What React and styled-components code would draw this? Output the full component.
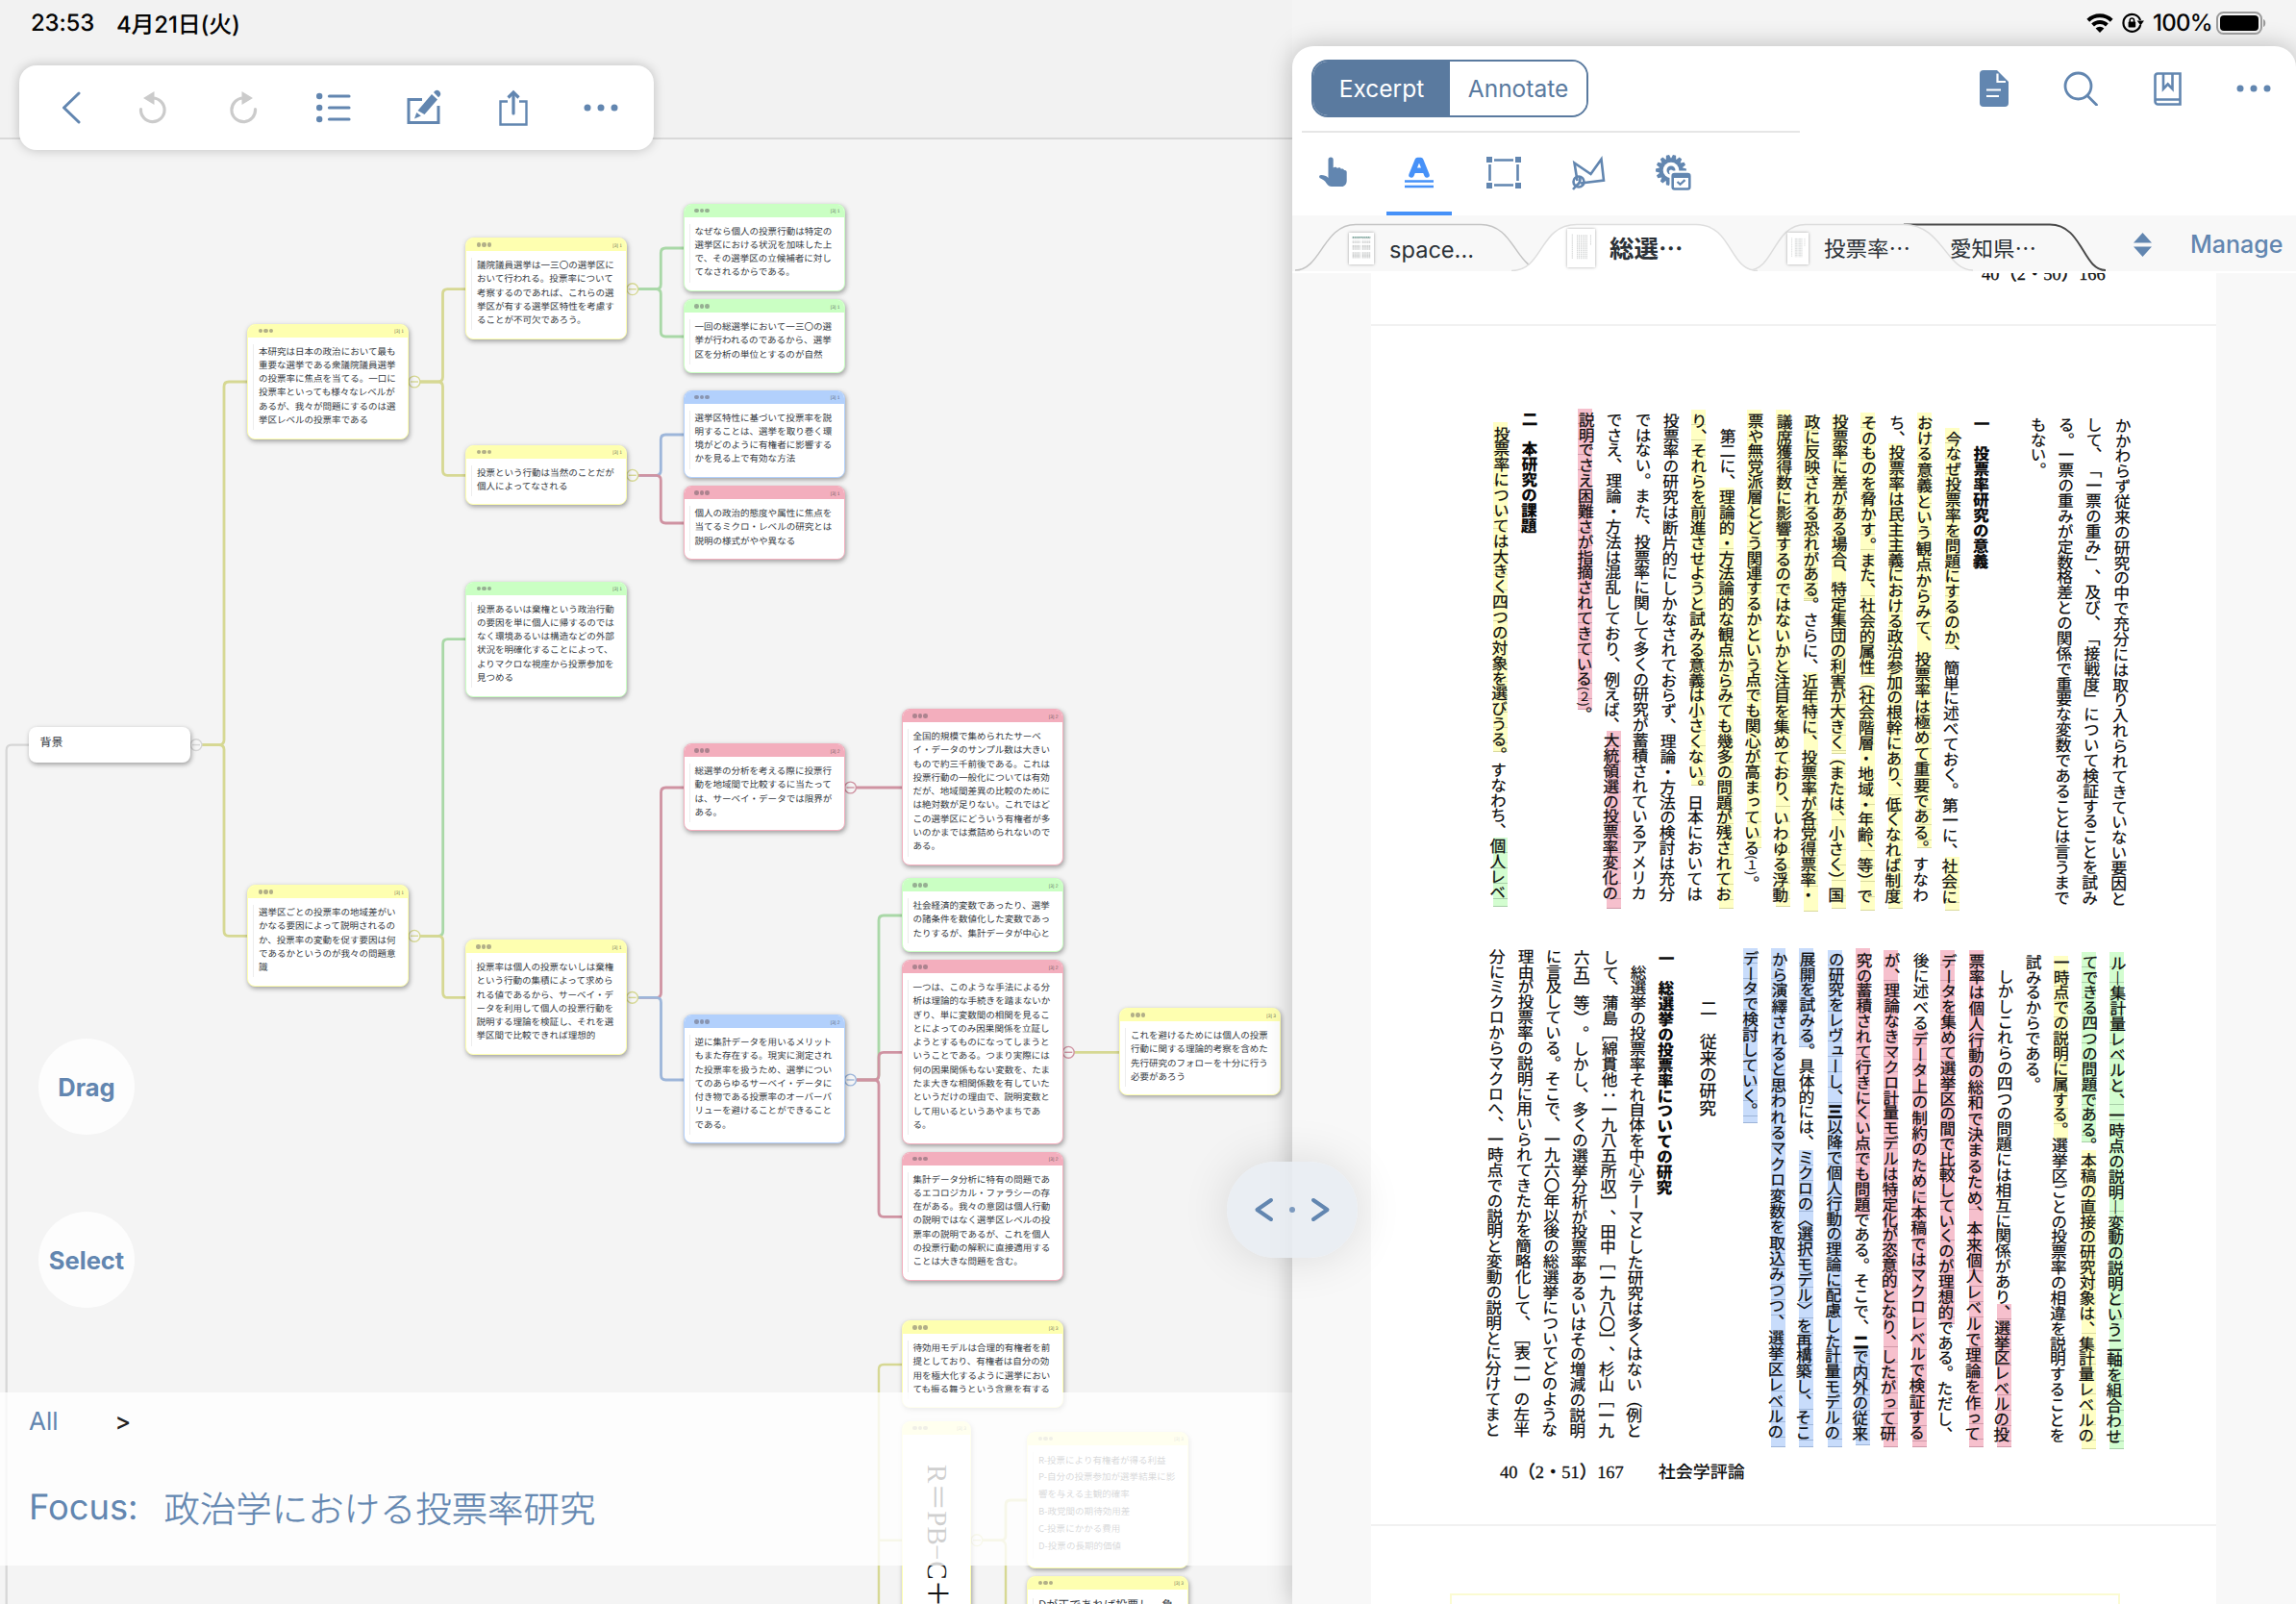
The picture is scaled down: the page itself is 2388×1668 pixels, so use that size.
import React from "react";
import styled, { createGlobalStyle, css } from "styled-components";

const Global = createGlobalStyle`
  * { box-sizing: border-box; }
  body { margin: 0; background: #f4f4f4; overflow: hidden; text-rendering: geometricPrecision; text-spacing-trim: space-all; }
  svg { display: block; flex: none; }
`;

const UI = `Inter, "Noto Sans CJK JP", sans-serif`;
const JP = `"Noto Sans CJK JP", sans-serif`;
const BLUE = "#6286b0";

const HEAD = { yellow: "#feffb0", green: "#caffc3", blue: "#b2d0fc", pink: "#f3aebd" };
const LINE = { yellow: "#d6d893", green: "#a9d8a7", blue: "#9db6da", pink: "#cf93a2", grey: "#d6d6d6" };
const MARK = { yellow: "#ffffc4", green: "#d3fdd0", blue: "#c8dcfb", pink: "#f6c0cd" };
const RULE = { yellow: "#d9d99e", green: "#a8cfa8", blue: "#9db4d8", pink: "#cf98a8" };

/* ---------- shell ---------- */

const Screen = styled.div`
  position: relative;
  width: 2388px;
  height: 1668px;
  overflow: hidden;
  display: grid;
  grid-template-columns: 1344px 1044px;
  background: #f4f4f4;
  font-family: ${UI};
`;

const StatusBar = styled.header`
  position: absolute;
  inset: 0 0 auto 0;
  height: 47px;
  padding: 0 31px 0 32px;
  display: flex;
  align-items: center;
  color: #050505;
  font-size: 24px;
  font-weight: 500;
  z-index: 5;
`;
const Clock = styled.span`
  width: 89px;
  letter-spacing: -0.2px;
`;
const DateText = styled.span`
  flex: 1;
  letter-spacing: -0.2px;
`;
const StatusIcons = styled.div`
  display: flex;
  align-items: center;
  gap: 9px;
`;
const Percent = styled.span`
  letter-spacing: -0.7px;
`;
const Battery = styled.svg`
  margin-left: -5px;
`;

/* ---------- mind map ---------- */

const Map = styled.section`
  position: relative;
  height: 1668px;
  overflow: hidden;
  background: #f4f4f4;
`;
const MapHeader = styled.div`
  height: 145px;
  background: #f2f2f2;
  border-bottom: 2px solid #d9d9d9;
`;
const Edges = styled.svg`
  position: absolute;
  inset: 0;
`;
const Toolbar = styled.nav`
  position: absolute;
  left: 20px;
  top: 68px;
  width: 660px;
  height: 88px;
  border-radius: 18px;
  background: #fff;
  box-shadow: 0 0 12px rgba(0, 0, 0, 0.22);
  padding-left: 7px;
  display: flex;
  align-items: center;
`;
const Tool = styled.button`
  flex: none;
  width: ${(p) => p.$w || 94}px;
  height: 88px;
  padding: 0;
  border: 0;
  background: none;
  display: flex;
  align-items: center;
  justify-content: center;
`;

const Node = styled.article`
  position: absolute;
  left: ${(p) => p.$x}px;
  top: ${(p) => p.$y}px;
  width: ${(p) => p.$w || 168}px;
  height: ${(p) => p.$h}px;
  border-radius: 8px;
  overflow: hidden;
  background: #fff;
  border: ${(p) => (p.$tone ? `1.5px solid ${HEAD[p.$tone]}` : "0")};
  box-shadow: 1px 2px 5px rgba(0, 0, 0, 0.36);
`;
const NodeHead = styled.div`
  height: 13px;
  padding: 0 4px 0 10.5px;
  display: flex;
  align-items: center;
  justify-content: space-between;
  background: ${(p) => HEAD[p.$tone]};
`;
const Dots = styled.span`
  display: flex;
  gap: 1.2px;
  i { width: 4.5px; height: 4.5px; border-radius: 50%; background: rgba(90, 80, 90, 0.46); }
`;
const PageRef = styled.span`
  font: 5px/6px "Liberation Sans", sans-serif;
  color: rgba(60, 60, 60, 0.75);
  padding-top: 2px;
`;
const NodeBody = styled.div`
  margin: ${(p) => p.$mt || 7}px 0 8px 5px;
  padding-left: 5px;
  border-left: 1px solid #ededed;
  font-family: ${JP};
  font-size: ${(p) => p.$fs || 9.53}px;
  line-height: ${(p) => p.$lh || 14.3}px;
  color: #363b43;
  padding-bottom: 4px;
`;
const Line = styled.div`
  white-space: nowrap;
`;
const RootLabel = styled.div`
  padding: 5.5px 12px;
  font-family: ${JP};
  font-size: 12px;
  line-height: 21px;
  color: #363b43;
`;
const Formula = styled.div`
  margin: 31px 0 0 3px;
  width: 64px;
  line-height: 64px;
  writing-mode: vertical-rl;
  text-orientation: sideways;
  white-space: nowrap;
  font-family: "Liberation Serif", "Noto Sans CJK JP", serif;
  font-size: 29px;
  color: #111;
`;
const Minus = styled.span`
  margin: 0 3px;
`;

const FloatButton = styled.button`
  position: absolute;
  left: 40px;
  top: ${(p) => p.$y}px;
  width: 100px;
  height: 100px;
  border: 0;
  border-radius: 50%;
  background: rgba(255, 255, 255, 0.8);
  color: ${BLUE};
  font: 700 25.5px ${UI};
  padding: 0;
`;
const FocusBar = styled.div`
  position: absolute;
  left: 0;
  right: 0;
  top: 1448px;
  height: 180px;
  padding: 0 30px;
  background: rgba(255, 255, 255, 0.8);
  color: ${BLUE};
`;
const Crumbs = styled.div`
  height: 61px;
  display: flex;
  align-items: center;
  gap: 59px;
  font-size: 26px;
  b { color: #222; font-weight: 500; font-size: 25px; }
`;
const FocusTitle = styled.h1`
  margin: 0;
  height: 115px;
  display: flex;
  align-items: center;
  gap: 27px;
  font-size: 36.3px;
  font-weight: 400;
  span:last-child { font-family: ${JP}; font-weight: 300; font-size: 37.4px; -webkit-text-stroke: 0.35px ${BLUE}; }
`;

/* ---------- document panel ---------- */

const Panel = styled.section`
  position: relative;
  margin-top: 48px;
  height: 1620px;
  border-radius: 22px 22px 0 0;
  background: #fff;
  box-shadow: 0 0 26px rgba(0, 0, 0, 0.24);
  display: flex;
  flex-direction: column;
`;
const TopRow = styled.div`
  height: 88px;
  padding: 0 0 0 20px;
  display: flex;
  align-items: center;
  justify-content: space-between;
`;
const Segmented = styled.div`
  display: flex;
  width: 288px;
  height: 60px;
  border: 2px solid #5a7a9f;
  border-radius: 17px;
  overflow: hidden;
`;
const Segment = styled.button`
  flex: 1;
  border: 0;
  padding: 0;
  background: ${(p) => (p.$on ? "#5a7a9f" : "#fff")};
  color: ${(p) => (p.$on ? "#fff" : "#5a7a9f")};
  font: 400 24.5px ${UI};
`;
const PanelActions = styled.div`
  display: flex;
`;
const Rule = styled.div`
  width: 518px;
  height: 2px;
  margin-left: 10px;
  background: #e6e6e6;
`;
const Tools = styled.div`
  height: 86px;
  padding-left: 9px;
  display: flex;
`;
const DocTool = styled.button`
  flex: none;
  width: 68px;
  margin: 0 ${(p) => p.$gap || 20}px 0 0;
  height: 86px;
  padding: 0;
  border: 0;
  border-bottom: 4px solid ${(p) => (p.$on ? "#4691f8" : "transparent")};
  background: none;
  display: flex;
  align-items: center;
  justify-content: center;
`;
const TabStrip = styled.div`
  position: relative;
  height: 58px;
  background: #f8f8f8;
  display: flex;
  align-items: center;
`;
const TabShapes = styled.svg`
  position: absolute;
  inset: 0;
`;
const Tab = styled.div`
  position: relative;
  width: ${(p) => p.$w}px;
  padding-left: ${(p) => p.$pad}px;
  height: 58px;
  display: flex;
  align-items: center;
  gap: ${(p) => p.$gap || 15}px;
  white-space: nowrap;
  color: #2b3137;
  font-size: ${(p) => p.$fs || 22.5}px;
  font-weight: ${(p) => (p.$on ? 700 : 400)};
  span { padding-top: 14px; line-height: 30px; }
`;
const Thumb = styled.div`
  width: ${(p) => p.$w}px;
  height: ${(p) => p.$h}px;
  margin-top: 10px;
  padding: 4px 3px;
  background: #fff;
  box-shadow: 0 0 3px rgba(0, 0, 0, 0.35);
  svg { width: 100%; height: 100%; }
`;
const Manage = styled.button`
  position: relative;
  border: 0;
  padding: 2px 0 0;
  background: none;
  color: ${BLUE};
  font: 500 25px ${UI};
  display: flex;
  align-items: center;
  gap: 40px;
`;
const Reader = styled.div`
  flex: 1;
  min-height: 0;
  margin-top: 2px;
  padding: 0 83px 0 82px;
  background: #f8f8f8;
  overflow: hidden;
`;
const Sheet = styled.div`
  height: ${(p) => p.$h}px;
  background: #fff;
  border-bottom: 2px solid #f1f1f1;
  overflow: hidden;
`;
const Folio = styled.div`
  font-family: "Liberation Serif", "Noto Sans CJK JP", serif;
  font-size: 18.4px;
  font-weight: 500;
  color: #111;
  white-space: nowrap;
  display: flex;
  -webkit-text-stroke: 0.3px #111;
  line-height: 20px;
  gap: ${(p) => p.$gap || 0}px;
  margin: ${(p) => p.$m};
  span + span { font-size: 18px; -webkit-text-stroke: 0; }
`;
const PrevFolio = styled(Folio)`
  margin: -9px 0 0 635px;
`;
const Block = styled.div`
  height: 508px;
  margin: ${(p) => p.$m};
  display: flex;
  flex-direction: row-reverse;
  align-items: flex-start;
`;
const Column = styled.div`
  position: relative;
  flex: none;
  width: ${(p) => p.$w}px;
  height: 508px;
  margin-top: ${(p) => p.$drop}px;
`;
const Glyphs = styled.div`
  position: relative;
  left: 0.8px;
  height: 508px;
  line-height: ${(p) => p.$w}px;
  writing-mode: vertical-rl;
  white-space: pre;
  transform: skewX(-0.55deg);
  transform-origin: 50% 0;
  font-family: ${JP};
  font-size: ${(p) => p.$fs}px;
  font-weight: ${(p) => (p.$bold ? 900 : 400)};
  -webkit-text-stroke: ${(p) => (p.$bold ? 0 : 0.22)}px #0c0c0c;
  letter-spacing: ${(p) => p.$ls}px;
  color: #0c0c0c;
`;
const NoteRef = styled.span`
  font-size: 12.5px;
  letter-spacing: 0;
`;
const Strong = styled.span`
  font-weight: 900;
`;
const Highlight = styled.div`
  position: absolute;
  left: 7px;
  width: 15px;
  top: ${(p) => p.$y}px;
  height: ${(p) => p.$h}px;
  border-bottom: 1px solid ${(p) => RULE[p.$c]};
  ${(p) => css`background: repeating-linear-gradient(${MARK[p.$c]} 0 15px, ${RULE[p.$c]} 15px 15.9px);`}
`;
const NextFrame = styled.div`
  margin: 70px 100px 0 82px;
  height: 60px;
  border: 2px solid #fbfbd2;
`;

const Handle = styled.div`
  position: absolute;
  left: 1276px;
  top: 1208px;
  width: 136px;
  height: 100px;
  border-radius: 50px;
  background: rgba(232, 236, 242, 0.86);
  box-shadow: 0 0 50px rgba(0, 0, 0, 0.12);
  display: flex;
  align-items: center;
  justify-content: center;
  z-index: 4;
`;

/* ---------- data ---------- */

const NODES = [
  { x: 257, y: 337, t: "yellow", r: "[3] 1", l: ["本研究は日本の政治において最も", "重要な選挙である衆議院議員選挙", "の投票率に焦点を当てる。一口に", "投票率といっても様々なレベルが", "あるが、我々が問題にするのは選", "挙区レベルの投票率である"] },
  { x: 484, y: 247.5, t: "yellow", r: "[3] 1", l: ["議院議員選挙は一三〇の選挙区に", "おいて行われる。投票率について", "考察するのであれば、これらの選", "挙区が有する選挙区特性を考慮す", "ることが不可欠であろう。"] },
  { x: 484, y: 463, t: "yellow", r: "[3] 1", l: ["投票という行動は当然のことだが", "個人によってなされる"] },
  { x: 710.5, y: 212, t: "green", r: "[3] 1", l: ["なぜなら個人の投票行動は特定の", "選挙区における状況を加味した上", "で、その選挙区の立候補者に対し", "てなされるからである。"] },
  { x: 710.5, y: 311.5, t: "green", r: "[3] 1", l: ["一回の総選挙において一三〇の選", "挙が行われるのであるから、選挙", "区を分析の単位とするのが自然"] },
  { x: 710.5, y: 406, t: "blue", r: "[3] 1", l: ["選挙区特性に基づいて投票率を説", "明することは、選挙を取り巻く環", "境がどのように有権者に影響する", "かを見る上で有効な方法"] },
  { x: 710.5, y: 505.5, t: "pink", r: "[3] 1", l: ["個人の政治的態度や属性に焦点を", "当てるミクロ・レベルの研究とは", "説明の様式がやや異なる"] },
  { x: 484, y: 605, t: "green", r: "[3] 1", l: ["投票あるいは棄権という政治行動", "の要因を単に個人に帰するのでは", "なく環境あるいは構造などの外部", "状況を明確化することによって、", "よりマクロな視座から投票参加を", "見つめる"] },
  { x: 257, y: 920.5, t: "yellow", r: "[3] 1", l: ["選挙区ごとの投票率の地域差がい", "かなる要因によって説明されるの", "か、投票率の変動を促す要因は何", "であるかというのが我々の問題意", "識"] },
  { x: 483.5, y: 977.5, t: "yellow", r: "[3] 1", l: ["投票率は個人の投票ないしは棄権", "という行動の集積によって求めら", "れる値であるから、サーベイ・デ", "ータを利用して個人の投票行動を", "説明する理論を検証し、それを選", "挙区間で比較できれば理想的"] },
  { x: 710.5, y: 773.5, t: "pink", r: "[3] 2", l: ["総選挙の分析を考える際に投票行", "動を地域間で比較するに当たって", "は、サーベイ・データでは限界が", "ある。"] },
  { x: 937.5, y: 737.5, t: "pink", r: "[3] 2", l: ["全国的規模で集められたサーベ", "イ・データのサンプル数は大きい", "もので約三千前後である。これは", "投票行動の一般化については有効", "だが、地域間差異の比較のために", "は絶対数が足りない。これではど", "この選挙区にどういう有権者が多", "いのかまでは煮詰められないので", "ある。"] },
  { x: 937.5, y: 913.5, t: "green", r: "[3] 2", l: ["社会経済的変数であったり、選挙", "の諸条件を数値化した変数であっ", "たりするが、集計データが中心と"] },
  { x: 937.5, y: 998.5, t: "pink", r: "[3] 2", l: ["一つは、このような手法による分", "析は理論的な手続きを踏まないか", "ぎり、単に変数間の相関を見るこ", "とによってのみ因果関係を立証し", "ようとするものになってしまうと", "いうことである。つまり実際には", "何の因果関係もない変数を、たま", "たま大きな相関係数を有していた", "というだけの理由で、説明変数と", "して用いるというあやまちであ", "る。"] },
  { x: 937.5, y: 1198, t: "pink", r: "[3] 2", l: ["集計データ分析に特有の問題であ", "るエコロジカル・ファラシーの存", "在がある。我々の意図は個人行動", "の説明ではなく選挙区レベルの投", "票率の説明であるが、これを個人", "の投票行動の解釈に直接適用する", "ことは大きな問題を含む。"] },
  { x: 710.5, y: 1055.5, t: "blue", r: "[3] 2", l: ["逆に集計データを用いるメリット", "もまた存在する。現実に測定され", "た投票率を扱うため、選挙につい", "てのあらゆるサーベイ・データに", "付き物である投票率のオーバーバ", "リューを避けることができること", "である。"] },
  { x: 1164, y: 1048.5, t: "yellow", r: "[3] 3", l: ["これを避けるためには個人の投票", "行動に関する理論的考察を含めた", "先行研究のフォローを十分に行う", "必要があろう"] },
  { x: 937.5, y: 1373.5, t: "yellow", r: "[3] 3", l: ["待効用モデルは合理的有権者を前", "提としており、有権者は自分の効", "用を極大化するように選挙におい", "ても振る舞うという含意を有する"] },
  { x: 1068, y: 1489, t: "yellow", r: "[3] 3", h: 142, lh: 17.9, l: ["R-投票により有権者が得る利益", "P-自分の投票参加が選挙結果に影", "響を与える主観的確率", "B-政党間の期待効用差", "C-投票にかかる費用", "D-投票の長期的価値"] },
  { x: 1068, y: 1639, t: "yellow", r: "[3] 3", h: 80, fs: 12, mt: 9.5, l: ["Dが正であれば投票し、負"] },
];

const EDGES = [
  ["yellow", 210, 774.6, 233, 397, 257],
  ["yellow", 210, 774.6, 233, 973.3, 257],
  ["yellow", 437, 397, 460.5, 300.7, 484],
  ["yellow", 437, 397, 460.5, 494.3, 484],
  ["green", 664, 300.7, 687.3, 258, 711],
  ["green", 664, 300.7, 687.3, 350, 711],
  ["blue", 664, 494.3, 687.3, 452, 711],
  ["pink", 664, 494.3, 687.3, 544, 711],
  ["green", 437, 973.3, 460.7, 664.6, 484],
  ["yellow", 437, 973.3, 460.7, 1037.4, 484],
  ["pink", 664, 1037.4, 687.5, 819, 711],
  ["blue", 664, 1037.4, 687.5, 1123, 711],
  ["green", 891, 1123, 914, 952, 938],
  ["pink", 891, 1123, 914, 1094.3, 938],
  ["pink", 891, 1123, 914, 1265.3, 938],
  ["yellow", 1022, 1601.7, 1046, 1560, 1068],
];

const TOGGLES = [
  ["grey", 204, 774.6], ["yellow", 431, 397], ["yellow", 657.8, 300.7], ["yellow", 657.8, 494.3],
  ["yellow", 431, 973.3], ["yellow", 657.6, 1037.4], ["pink", 884.5, 819], ["blue", 884.5, 1123],
  ["pink", 1111.3, 1094.3], ["yellow", 1016, 1601.7],
];

const bend = (x1, y1, xm, y2, x2) => {
  const d = y2 > y1 ? 5 : -5;
  return `M${x1} ${y1}H${xm - 5}Q${xm} ${y1} ${xm} ${y1 + d}V${y2 - d}Q${xm} ${y2} ${xm + 5} ${y2}H${x2}`;
};

const UPPER = [
  { t: "かかわらず従来の研究の中で充分には取り入れられてきていない要因と" },
  { t: "して、「一票の重み」、及び、「接戦度」について検証することを試み" },
  { t: "る。一票の重みが定数格差との関係で重要な変数であることは言うまで" },
  { t: "もない。" },
  { t: "" },
  { t: "一　投票率研究の意義", b: 1 },
  { t: "　今なぜ投票率を問題にするのか、簡単に述べておく。第一に、社会に", h: [["yellow", 445, 675], ["yellow", 891, 947]] },
  { t: "おける意義という観点からみて、投票率は極めて重要である。すなわ", h: [["yellow", 429, 882]] },
  { t: "ち、投票率は民主主義における政治参加の根幹にあり、低くなれば制度", h: [["yellow", 461, 945]] },
  { t: "そのものを脅かす。また、社会的属性（社会階層・地域・年齢、等）で", h: [["yellow", 429, 704], ["yellow", 710, 947]] },
  { t: "投票率に差がある場合、特定集団の利害が大きく（または、小さく）国", h: [["yellow", 431, 784], ["yellow", 789, 945]] },
  { t: "政に反映される恐れがある。さらに、近年特に、投票率が各党得票率・", h: [["yellow", 432, 625], ["yellow", 699, 948]] },
  { t: "議席獲得数に影響するのではないかと注目を集めており、いわゆる浮動", h: [["yellow", 426, 943]] },
  { t: "票や無党派層とどう関連するかという点でも関心が高まっている(１)。", h: [["yellow", 426, 882]] },
  { t: "　第二に、理論的・方法論的な観点からみても幾多の問題が残されてお", h: [["yellow", 507, 945]] },
  { t: "り、それらを前進させようと試みる意義は小さくない。日本においては", h: [["yellow", 426, 817]] },
  { t: "投票率の研究は断片的にしかなされておらず、理論・方法の検討は充分" },
  { t: "ではない。また、投票率に関して多くの研究が蓄積されているアメリカ" },
  { t: "でさえ、理論・方法は混乱しており、例えば、大統領選の投票率変化の", h: [["pink", 760, 945]] },
  { t: "説明でさえ困難さが指摘されてきている(２)。", h: [["pink", 425, 738]] },
  { t: "" },
  { t: "二　本研究の課題", b: 1 },
  { t: "　投票率については大きく四つの対象を選びうる。すなわち、個人レベ", h: [["yellow", 439, 782], ["green", 871, 943]] },
];

const LOWER = [
  { t: "ル―集計量レベルと、一時点の説明―変動の説明という二軸を組合わせ", h: [["green", 990, 1507]] },
  { t: "てできる四つの問題である。本稿の直接の研究対象は、集計量レベルの", h: [["green", 990, 1188], ["yellow", 1196, 1507]] },
  { t: "一時点での説明に属する。選挙区ごとの投票率の相違を説明することを", h: [["yellow", 994, 1185]] },
  { t: "試みるからである。" },
  { t: "　しかしこれらの四つの問題には相互に関係があり、選挙区レベルの投", h: [["pink", 1356, 1505]] },
  { t: "票率は個人行動の総和で決まるため、本来個人レベルで理論を作って", h: [["pink", 988, 1505]] },
  { t: "データを集めて選挙区の間で比較していくのが理想的である。ただし、", h: [["pink", 988, 1377]] },
  { t: "後に述べるデータ上の制約のために本稿ではマクロレベルで検証する", h: [["pink", 1070, 1505]] },
  { t: "が、理論なきマクロ計量モデルは特定化が恣意的となり、したがって研", h: [["pink", 988, 1505]] },
  { t: "究の蓄積されて行きにくい点でも問題である。そこで、*二*で内外の従来", h: [["pink", 986, 1264], ["blue", 1403, 1503]] },
  { t: "の研究をレヴューし、*三*以降で個人行動の理論に配慮した計量モデルの", h: [["blue", 988, 1505]] },
  { t: "展開を試みる。具体的には、ミクロの〈選択モデル〉を再構築し、そこ", h: [["blue", 986, 1089], ["blue", 1196, 1505]] },
  { t: "から演繹されると思われるマクロ変数を取込みつつ、選挙区レベルの", h: [["blue", 986, 1505]] },
  { t: "データで検討していく。", h: [["blue", 986, 1168]] },
  { t: "　　　二　従来の研究", w: 58.7, fs: 18, pitch: 17.2 },
  { t: "一　総選挙の投票率についての研究", b: 1 },
  { t: "　総選挙の投票率それ自体を中心テーマとした研究は多くはない（例と" },
  { t: "して、蒲島［綿貫他：一九八五所収］、田中［一九八〇］、杉山［一九" },
  { t: "六五］等）。しかし、多くの選挙分析が投票率あるいはその増減の説明" },
  { t: "に言及している。そこで、一九六〇年以後の総選挙についてどのような" },
  { t: "理由が投票率の説明に用いられてきたかを簡略化して、［表一］の左半" },
  { t: "分にミクロからマクロへ、一時点での説明と変動の説明とに分けてまと" },
];

/* ---------- parts ---------- */

function MapNode({ n }) {
  const h = n.h || 34.2 + n.l.length * 14.3;
  return (
    <Node $x={n.x} $y={n.y - 0.5} $h={h} $tone={n.t}>
      <NodeHead $tone={n.t}>
        <Dots><i /><i /><i /></Dots>
        <PageRef>{n.r}</PageRef>
      </NodeHead>
      <NodeBody $lh={n.lh} $fs={n.fs} $mt={n.mt}>
        {n.l.map((s) => <Line key={s}>{s}</Line>)}
      </NodeBody>
    </Node>
  );
}

function TextBlock({ cols, top, m }) {
  let slot = 0;
  return (
    <Block $m={m}>
      {cols.map((c, i) => {
        const drop = -0.31 * slot;
        const w = c.w || 29.36;
        slot += w / 29.36;
        const plain = c.t.replace(/\*/g, "");
        const n = plain.length;
        const noted = /\(/.test(plain);
        const fs = c.fs || 16.7;
        const pitch = c.pitch || (n >= 30 && !noted ? 508 / n : 15.87);
        return (
          <Column key={i} $w={w} $drop={drop}>
            {(c.h || []).map(([k, a, b]) => (
              <Highlight key={a} $c={k} $y={a - top - drop} $h={b - a} />
            ))}
            <Glyphs $w={w} $fs={fs} $bold={c.b} $ls={+(pitch - fs).toFixed(3)}>
              {c.t.split(/(\(.\)|\*.\*)/).map((s, j) =>
                s[0] === "(" ? <NoteRef key={j}>{s}</NoteRef>
                  : s[0] === "*" ? <Strong key={j}>{s[1]}</Strong> : s
              )}
            </Glyphs>
          </Column>
        );
      })}
    </Block>
  );
}

const Ellipsis = () => (
  <svg width="36" height="8" fill={BLUE}><circle cx="4" cy="4" r="3.5" /><circle cx="18" cy="4" r="3.5" /><circle cx="32" cy="4" r="3.5" /></svg>
);

const Undo = () => (
  <svg width="30" height="34" viewBox="0 0 30 34" fill="none">
    <path d="M2.5 18.5A12.3 12.3 0 1 0 15 7" stroke="#cbcbcb" strokeWidth="3.2" strokeLinecap="round" />
    <path d="M16.5 0v14L5 7z" fill="#cbcbcb" />
  </svg>
);
const Flip = styled.span`
  transform: scaleX(-1);
`;

function gearPath(cx, cy, r1, r2, n) {
  let d = "";
  for (let i = 0; i < n; i++) {
    const a = (i / n) * Math.PI * 2;
    const s = Math.PI / n;
    [[r1, -0.95], [r2, -0.45], [r2, 0.45], [r1, 0.95]].forEach(([r, k], j) => {
      d += `${i || j ? "L" : "M"}${(cx + r * Math.cos(a + s * k)).toFixed(2)} ${(cy + r * Math.sin(a + s * k)).toFixed(2)}`;
    });
  }
  return d + "Z";
}

const ThumbLines = ({ vertical }) => (
  <svg viewBox="0 0 30 40" preserveAspectRatio="none" stroke="#a9adad" strokeWidth="1" strokeDasharray="2 .7">
    {vertical
      ? [10, 12.5, 15, 17.5, 20, 22.5].map((x) => <path key={x} d={`M${x} 3V34`} opacity=".7" />).concat(<path key="s" d="M3 2V34M28 3V16" opacity=".6" />)
      : [3, 8, 10, 15, 17, 19, 21, 27, 29, 31, 33, 35].map((y) => <path key={y} d={`M1 ${y}H13M16 ${y}H29`} />).concat(<path key="s" d="M1 1H29" stroke="#6f9c92" strokeWidth="2.5" />)}
  </svg>
);

export default function App() {
  return (
    <Screen>
      <Global />
      <StatusBar>
        <Clock>23:53</Clock>
        <DateText>4月21日(火)</DateText>
        <StatusIcons>
          <svg width="28" height="21" viewBox="0 0 28 21" fill="none" stroke="#000" strokeWidth="4">
            <path d="M1.8 8.2a17.5 17.5 0 0 1 24.4 0" /><path d="M6.6 13a10.6 10.6 0 0 1 14.8 0" />
            <path d="M14 21l-4.4-4.6a6.4 6.4 0 0 1 8.8 0z" fill="#000" stroke="none" />
          </svg>
          <svg width="23" height="22" viewBox="0 0 23 22" fill="none" stroke="#000" strokeWidth="2.2">
            <path d="M19.2 13A9 9 0 1 1 19 8" /><path d="M15.6 8.5H23L19.4 13.6z" fill="#000" stroke="none" />
            <rect x="6.6" y="9.6" width="7.6" height="5.8" rx="1" fill="#000" stroke="none" />
            <path d="M8.2 10V8.2a2.2 2.2 0 0 1 4.4 0V10" strokeWidth="1.5" />
          </svg>
          <Percent>100%</Percent>
          <Battery width="52" height="24" viewBox="0 0 52 24">
            <rect x="1" y="1" width="46" height="22" rx="6.5" fill="none" stroke="#9a9a9a" strokeWidth="2" />
            <rect x="4" y="4" width="40" height="16" rx="4" fill="#000" />
            <path d="M49 8c3 1 3 7 0 8z" fill="#9a9a9a" />
          </Battery>
        </StatusIcons>
      </StatusBar>

      <Map>
        <MapHeader />
        <Edges width="1344" height="1668" fill="none" strokeWidth="2.8">
          <path d="M6.7 1668V780Q6.7 774.6 12 774.6H30" stroke={LINE.grey} strokeWidth="2.2" />
          {EDGES.map((e, i) => (
            <path key={i} d={bend(e[1], e[2], e[3], e[4], e[5])} stroke={LINE[e[0]]} />
          ))}
          <path d="M890 819H938" stroke={LINE.pink} />
          <path d="M1117 1094.3H1164" stroke={LINE.yellow} />
          <path d="M914 1668V1424Q914 1419 919 1419H938M914 1601.7H938" stroke={LINE.yellow} strokeWidth="2.4" />
          <path d="M1040 1601.7Q1046 1601.7 1046 1608V1668" stroke={LINE.yellow} strokeWidth="2.4" />
          {TOGGLES.map(([c, x, y]) => (
            <g key={`${x}${y}`} stroke={LINE[c]} strokeWidth="1.4">
              <circle cx={x} cy={y} r="5.9" fill="#f6f6f6" /><path d={`M${x - 4} ${y}h8`} />
            </g>
          ))}
        </Edges>

        <Node $x={29.5} $y={755.5} $h={37}><RootLabel>背景</RootLabel></Node>
        {NODES.map((n) => <MapNode key={n.l[0]} n={n} />)}
        <Node $x={937.5} $y={1477.5} $w={72.5} $h={240} $tone="yellow">
          <NodeHead $tone="yellow"><Dots><i /><i /><i /></Dots><PageRef>[3] 3</PageRef></NodeHead>
          <Formula>R＝PB<Minus>−</Minus>C＋</Formula>
        </Node>

        <FloatButton $y={1080}>Drag</FloatButton>
        <FloatButton $y={1260}>Select</FloatButton>

        <FocusBar>
          <Crumbs><span>All</span><b>&gt;</b></Crumbs>
          <FocusTitle><span>Focus:</span><span>政治学における投票率研究</span></FocusTitle>
        </FocusBar>

        <Toolbar>
          <Tool>
            <svg width="20" height="34" fill="none" stroke={BLUE} strokeWidth="3" strokeLinecap="round" strokeLinejoin="round"><path d="M18 2L2.5 17 18 32" /></svg>
          </Tool>
          <Tool $w={76}><Undo /></Tool>
          <Tool $w={112}><Flip><Undo /></Flip></Tool>
          <Tool $w={75}>
            <svg width="36" height="32" fill={BLUE} stroke={BLUE} strokeWidth="3.2" strokeLinecap="round">
              {[4, 16, 28].map((y) => <g key={y}><circle cx="3.2" cy={y} r="3.2" stroke="none" /><path d={`M13.5 ${y}H34`} /></g>)}
            </svg>
          </Tool>
          <Tool $w={114}>
            <svg width="37" height="38" viewBox="0 0 37 38" fill="none" stroke={BLUE}>
              <path d="M16 10.5H2V34.5H33V17" strokeWidth="3" />
              <path d="M26 5l6 5.5L18.5 26l-7-4z" fill={BLUE} stroke="none" />
              <path d="M10.3 24l4.6 3.6L8 30.5z" fill={BLUE} stroke="none" />
              <path d="M28 3l1.5-1.4c1.3-1.3 3.2-1 4.6.5s1.6 3.4.4 4.7L33 8.3z" fill={BLUE} stroke="none" />
            </svg>
          </Tool>
          <Tool $w={72}>
            <svg width="30" height="38" viewBox="0 0 30 38" fill="none" stroke={BLUE} strokeWidth="2.4">
              <path d="M9 12.5H1.5V36.5H28.5V12.5H21" /><path d="M15 25V4" strokeWidth="3.2" strokeLinecap="round" /><path d="M9.5 8.5L15 3l5.5 5.5" strokeWidth="3.2" />
            </svg>
          </Tool>
          <Tool $w={110}><Ellipsis /></Tool>
        </Toolbar>
      </Map>

      <Panel>
        <TopRow>
          <Segmented><Segment $on>Excerpt</Segment><Segment>Annotate</Segment></Segmented>
          <PanelActions>
            <Tool $w={90}>
              <svg width="30" height="38" viewBox="0 0 30 38">
                <path d="M4 0H18l12 12V34a4 4 0 0 1-4 4H4a4 4 0 0 1-4-4V4a4 4 0 0 1 4-4z" fill={BLUE} />
                <path d="M18.5 3.5V12H27M7 20.5H22M7 27H20" stroke="#fff" strokeWidth="2.2" fill="none" />
              </svg>
            </Tool>
            <Tool $w={90}>
              <svg width="36" height="36" fill="none" stroke={BLUE} strokeWidth="2.8"><circle cx="15.5" cy="15.5" r="13.5" /><path d="M25 25.5L34.5 35" strokeLinecap="round" /></svg>
            </Tool>
            <Tool $w={90}>
              <svg width="29" height="35" fill="none" stroke={BLUE} strokeWidth="2.6"><path d="M27.5 33.5H4.5a3 3 0 0 1-3-3V4a2.5 2.5 0 0 1 2.5-2.5H27.5zM1.5 28.5H27.5M10 2V17.5L14.7 12.5 19.5 17.5V2" /></svg>
            </Tool>
            <Tool $w={89}><Ellipsis /></Tool>
          </PanelActions>
        </TopRow>
        <Rule />
        <Tools>
          <DocTool $gap={21}>
            <svg width="30" height="32" viewBox="0 0 30 32" fill={BLUE}>
              <path d="M9.5 3a2.6 2.6 0 0 1 5.2 0v8.5c1-1.2 3.5-1 4.2.4 1.3-1 3.3-.6 3.9.8 1.300-.7 3 0 3.300 1.300 1.500-.3 2.600.6 2.600 2V25c0 3.500-2.500 6-5 6H13c-2 0-4-1-5.500-3.500C6 25 4 23.600 1.500 22.500-.8 21.400 0 19 2 19c3 0 5.500.8 7.500 3z" />
            </svg>
          </DocTool>
          <DocTool $on>
            <svg width="30" height="34" viewBox="0 0 30 34" fill="none" stroke="#4691f8" strokeWidth="3">
              <path d="M7 20L13.3 4.5h3.4L23 20M10 15.3H20" strokeWidth="5.5" strokeLinecap="round" strokeLinejoin="round" />
              <path d="M0 26.5H30M0 32H30" strokeWidth="2.7" />
            </svg>
          </DocTool>
          <DocTool>
            <svg width="36" height="33" viewBox="0 0 36 33" fill="none" stroke={BLUE} strokeWidth="2.6">
              <path d="M8 3.5H28M8 29.5H28M3.5 8V25M32.5 8V25" />
              <path d="M0 0h6v6H0zM30 0h6v6h-6zM0 27h6v6H0zM30 27h6v6h-6z" fill={BLUE} stroke="none" />
            </svg>
          </DocTool>
          <DocTool>
            <svg width="36" height="37" viewBox="0 0 36 37" fill="none" stroke={BLUE} strokeWidth="2.6">
              <path d="M6.5 27L3.5 8.5 20.5 20 31.5 4.5 34 26.5 10 29.5" />
              <circle cx="8" cy="28" r="5.5" /><path d="M2 36l4-4.5c3-1.5 4-5 3-9" />
            </svg>
          </DocTool>
          <DocTool>
            <svg width="37" height="37" viewBox="0 0 37 37">
              <path d={gearPath(16, 16, 12.4, 16, 14)} fill={BLUE} />
              <circle cx="16" cy="16" r="8.3" fill="#fff" /><circle cx="16" cy="16" r="4.5" fill={BLUE} /><circle cx="16" cy="17.5" r="2" fill="#fff" />
              <rect x="14.5" y="16.5" width="24" height="22" fill="#fff" />
              <rect x="17.7" y="20" width="17.6" height="15.5" rx="2" fill="none" stroke={BLUE} strokeWidth="2.6" />
              <path d="M17 22.5H36" stroke={BLUE} strokeWidth="3" /><path d="M22.5 28l3 2.8 5-4.6" stroke={BLUE} strokeWidth="2.3" fill="none" />
            </svg>
          </DocTool>
        </Tools>
        <TabStrip>
          <TabShapes width="1044" height="58" fill="none" strokeWidth="1.5">
            <path d="M636 9.5H788C822 9.5 822 57 846 57" stroke="#4a4a4a" strokeWidth="2" />
            <path d="M474 57C502 57 500 9.5 534 9.5H636C676 9.5 680 57 708 57z" fill="#f8f8f8" />
            <path d="M474 57C502 57 500 9.5 534 9.5H636C676 9.5 680 57 708 57" stroke="#dcdcdc" />
            <path d="M3 57C30 57 32 9.5 66 9.5H196C232 9.5 232 57 262 57" stroke="#c4c4c4" />
            <path d="M228 58C262 58 256 9.5 296 9.5H420C458 9.5 454 58 484 58z" fill="#fff" />
            <path d="M228 57.5C262 57.5 256 9.5 296 9.5H420C458 9.5 454 57.5 484 57.5" stroke="#dedede" />
          </TabShapes>
          <Tab $w={228} $pad={59} $fs={23.6} $gap={16}>
            <Thumb $w={26} $h={33}><ThumbLines /></Thumb><span>space...</span>
          </Tab>
          <Tab $w={232} $pad={58} $on $fs={25.5}>
            <Thumb $w={29} $h={40}><ThumbLines vertical /></Thumb><span>総選⋯</span>
          </Tab>
          <Tab $w={224} $pad={55} $gap={16}>
            <Thumb $w={22} $h={33}><ThumbLines vertical /></Thumb><span>投票率⋯</span>
          </Tab>
          <Tab $w={191} $pad={0}><span>愛知県⋯</span></Tab>
          <Manage>
            <svg width="19" height="25" fill={BLUE}><path d="M9.5 0L19 10.5H0zM9.5 25L19 14.5H0z" /></svg>
            Manage
          </Manage>
        </TabStrip>
        <Reader>
          <Sheet $h={55}><PrevFolio>40（2・50）166</PrevFolio></Sheet>
          <Sheet $h={1248}>
            <TextBlock cols={UPPER} top={433.5} m="94.5px 83.6px 0 0" />
            <TextBlock cols={LOWER} top={992.5} m="51px 88.3px 0 0" />
            <Folio $m="20px 0 0 134px" $gap={36}><span>40（2・51）167</span><span>社会学評論</span></Folio>
          </Sheet>
          <Sheet $h={200}><NextFrame /></Sheet>
        </Reader>
      </Panel>

      <Handle>
        <svg width="82" height="26" viewBox="0 0 82 26" fill="none" stroke={BLUE} strokeWidth="4" strokeLinecap="round" strokeLinejoin="round">
          <path d="M19 3L4.5 13 19 23M63 3l14.5 10L63 23" /><circle cx="41" cy="13" r="3" fill="#7d9abf" stroke="none" />
        </svg>
      </Handle>
    </Screen>
  );
}
